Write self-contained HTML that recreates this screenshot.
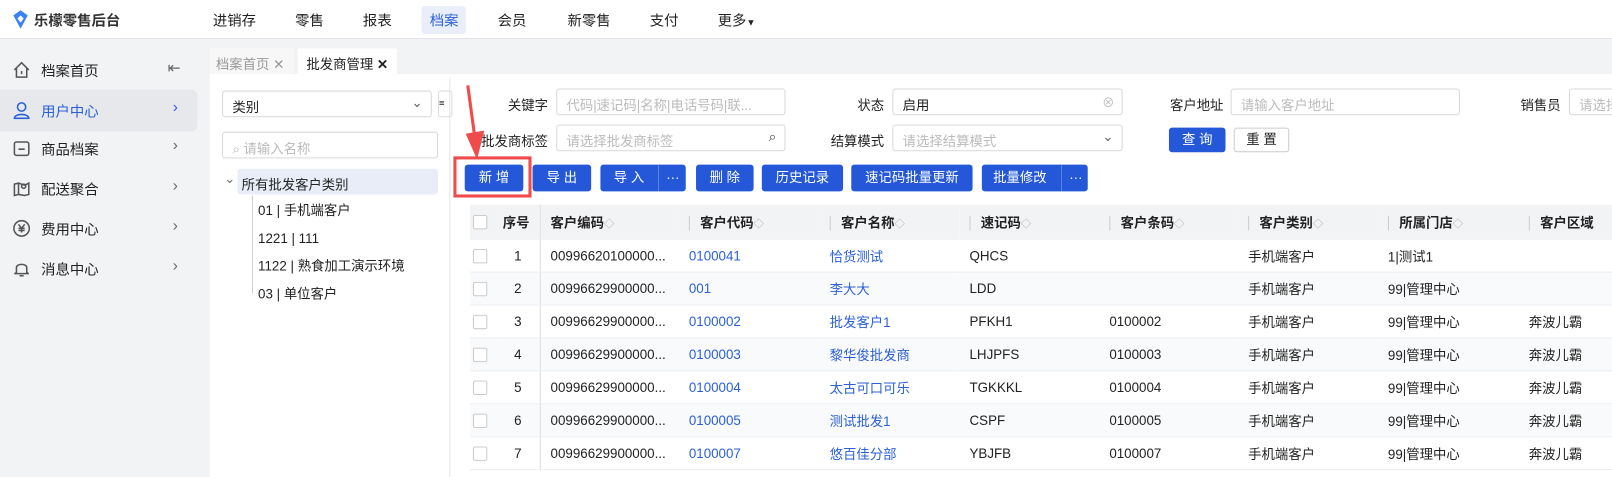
<!DOCTYPE html><html><head><meta charset="utf-8"><style>
*{box-sizing:border-box;margin:0;padding:0}
body{width:1612px;height:464px;overflow:hidden;background:#f2f3f5;font-family:"Liberation Sans","Noto Sans CJK SC",sans-serif;font-size:13px;color:#222;position:relative}
#w{position:absolute;left:0;top:0;width:1568px;height:451px;transform:scale(1.0281,1.0288);transform-origin:0 0}
.a{position:absolute}
.top{left:0;top:0;width:1612px;height:38px;background:#fff;border-bottom:1px solid #e2e3e6}
.nav{top:10px;font-size:14px;color:#222}
.side .it{position:absolute;left:0;width:192px;height:38px;font-size:14px}
.it span{position:absolute;left:40px;top:10px}
.it .ch{left:168px;top:8px;color:#666;font-size:15px}
.ic{position:absolute;left:12px;top:10px}
.inp{position:absolute;height:26px;border:1px solid #d9d9d9;border-radius:3px;background:#fff;color:#bbb;padding:5px 9px;font-size:13px;white-space:nowrap;overflow:hidden}
.lbl{position:absolute;font-size:13px;color:#222;text-align:right}
.btn{position:absolute;top:160px;height:26px;background:#2458d9;color:#fff;border-radius:3px;font-size:13px;text-align:center;line-height:26px}
table{position:absolute;left:457px;top:199px;border-collapse:collapse;table-layout:fixed;width:1160px}
td,th{height:32px;font-size:13px;padding:0 10px;white-space:nowrap;overflow:hidden;text-align:left;border-bottom:1px solid #ebeef3}
th{background:#f2f3f5;font-weight:bold;color:#222;height:33px}
tr:nth-child(odd) td{background:#f9fafb}
td.b{color:#2a5fd8}
.cb{display:inline-block;width:14px;height:14px;border:1px solid #ccc;border-radius:2px;background:#fff;vertical-align:middle}
.s{color:#aaa;font-weight:normal;font-size:10px}
th .sep{display:inline-block;width:1px;height:14px;background:#ccc;margin-right:10px;vertical-align:middle}
.tr{position:absolute;left:251px;height:18px;line-height:18px;overflow:hidden}
</style></head><body><div id="w">
<div class="a top"></div>
<svg class="a" style="left:12px;top:10px" width="16" height="18" viewBox="0 0 16 18"><path d="M8 0 L15 5 L8 18 L1 5Z" fill="#3b82f6"/><path d="M8 5 L11 8 L8 12 L5 8Z" fill="#fff"/></svg>
<div class="a" style="left:33px;top:10px;font-size:14px;font-weight:bold;color:#333">乐檬零售后台</div>
<div class="a" style="left:410px;top:6px;width:43px;height:27px;background:#e9eefa;border-radius:3px"></div>
<div class="a nav" style="left:207px">进销存</div>
<div class="a nav" style="left:287px">零售</div>
<div class="a nav" style="left:353px">报表</div>
<div class="a nav" style="left:418px;color:#2a5fd8">档案</div>
<div class="a nav" style="left:484px">会员</div>
<div class="a nav" style="left:552px">新零售</div>
<div class="a nav" style="left:632px">支付</div>
<div class="a nav" style="left:698px">更多<span style="font-size:9px">▼</span></div>

<div class="side">
<div class="it" style="top:49px"><svg class="ic" width="18" height="18" viewBox="0 0 18 18" fill="none" stroke="#555" stroke-width="1.5"><path d="M2 9 L9 2 L16 9 M4 7 V16 H14 V7 M9 10 V13"/></svg><span>档案首页</span><span class="ch" style="left:163px">⇤</span></div>
<div class="it" style="top:87px;background:#e6e8ec;border-radius:0 6px 6px 0;height:41px"><svg class="ic" style="top:11px" width="18" height="18" viewBox="0 0 18 18" fill="none" stroke="#2a5fd8" stroke-width="1.5"><circle cx="9" cy="6" r="4"/><path d="M2 17 C2 12 16 12 16 17Z"/></svg><span style="color:#2a5fd8;top:11px">用户中心</span><span class="ch" style="color:#2a5fd8;top:9px">›</span></div>
<div class="it" style="top:125px"><svg class="ic" width="18" height="18" viewBox="0 0 18 18" fill="none" stroke="#555" stroke-width="1.5"><rect x="2" y="3" width="14" height="13" rx="2"/><path d="M6 10 H12"/></svg><span>商品档案</span><span class="ch">›</span></div>
<div class="it" style="top:164px"><svg class="ic" width="18" height="18" viewBox="0 0 18 18" fill="none" stroke="#555" stroke-width="1.5"><path d="M2 5 L6 4 V15 L2 16Z M6 4 L12 6 L16 4 V15 L12 16 L6 15"/><circle cx="11" cy="7" r="2"/></svg><span>配送聚合</span><span class="ch">›</span></div>
<div class="it" style="top:203px"><svg class="ic" width="18" height="18" viewBox="0 0 18 18" fill="none" stroke="#555" stroke-width="1.5"><circle cx="9" cy="9" r="7.5"/><path d="M6 5 L9 9 L12 5 M9 9 V13 M6 9 H12 M6 11 H12"/></svg><span>费用中心</span><span class="ch">›</span></div>
<div class="it" style="top:242px"><svg class="ic" width="18" height="18" viewBox="0 0 18 18" fill="none" stroke="#555" stroke-width="1.5"><path d="M4 13 V8 C4 4 14 4 14 8 V13 L16 14 H2Z M7 16 H11"/></svg><span>消息中心</span><span class="ch">›</span></div>
</div>

<div class="a" style="left:204px;top:47px;width:82px;height:25px;background:#f7f7f8;color:#999;padding:5px 6px;font-size:13px">档案首页 ✕</div>
<div class="a" style="left:290px;top:47px;width:96px;height:25px;background:#fff;color:#222;padding:5px 8px;font-size:13px">批发商管理 <b>✕</b></div>
<div class="a" style="left:204px;top:72px;width:1408px;height:392px;background:#fff"></div>
<div class="a" style="left:437px;top:76px;width:1px;height:388px;background:#e5e6ea"></div>
<div class="a" style="left:426px;top:88px;width:14px;height:26px;border:1px solid #ddd;border-radius:3px;font-size:9px;padding-top:6px">≡</div>

<div class="inp" style="left:216px;top:88px;width:204px;color:#222">类别<span style="position:absolute;right:8px;top:3px;color:#666">⌄</span></div>
<div class="inp" style="left:216px;top:128px;width:210px">⌕ 请输入名称</div>
<div class="a" style="left:231px;top:164px;width:195px;height:25px;background:#e8edf8;border-radius:3px"></div>
<div class="a" style="left:218px;top:166px;color:#777">⌄</div>
<div class="a" style="left:235px;top:169px">所有批发客户类别</div>
<div class="a" style="left:245px;top:190px;width:1px;height:95px;background:#ccc"></div>
<div class="tr" style="top:196px">01 | 手机端客户</div>
<div class="tr" style="top:223px">1221 | 111</div>
<div class="tr" style="top:250px">1122 | 熟食加工演示环境</div>
<div class="tr" style="top:277px">03 | 单位客户</div>

<div class="lbl" style="left:480px;top:92px;width:53px">关键字</div>
<div class="inp" style="left:541px;top:86px;width:223px">代码|速记码|名称|电话号码|联...</div>
<div class="lbl" style="left:800px;top:92px;width:60px">状态</div>
<div class="inp" style="left:868px;top:86px;width:224px;color:#222">启用<span style="position:absolute;right:7px;top:4px;color:#bbb;font-size:12px">⊗</span></div>
<div class="lbl" style="left:1130px;top:92px;width:60px">客户地址</div>
<div class="inp" style="left:1197px;top:86px;width:223px">请输入客户地址</div>
<div class="lbl" style="left:1460px;top:92px;width:58px">销售员</div>
<div class="inp" style="left:1526px;top:86px;width:100px">请选择</div>
<div class="lbl" style="left:460px;top:127px;width:73px">批发商标签</div>
<div class="inp" style="left:541px;top:121px;width:223px">请选择批发商标签<span style="position:absolute;right:8px;top:3px;color:#444">⌕</span></div>
<div class="lbl" style="left:790px;top:127px;width:70px">结算模式</div>
<div class="inp" style="left:868px;top:121px;width:224px">请选择结算模式<span style="position:absolute;right:8px;top:3px;color:#666">⌄</span></div>
<div class="btn" style="left:1137px;top:124px;width:55px;height:24px;line-height:24px">查 询</div>
<div class="btn" style="left:1200px;top:124px;width:54px;height:24px;line-height:22px;background:#fff;color:#222;border:1px solid #ccc">重 置</div>

<div class="btn" style="left:452px;width:57px">新 增</div>
<div class="a" style="left:441px;top:152px;width:76px;height:40px;border:3px solid #ef4b4b"></div>
<div class="btn" style="left:518px;width:57px">导 出</div>
<div class="btn" style="left:584px;width:83px;text-align:left;padding-left:13px">导 入<span style="position:absolute;left:56px;top:0;height:26px;border-left:1px solid #5a80e0;padding-left:7px">···</span></div>
<div class="btn" style="left:677px;width:56px">删 除</div>
<div class="btn" style="left:741px;width:79px">历史记录</div>
<div class="btn" style="left:828px;width:118px">速记码批量更新</div>
<div class="btn" style="left:955px;width:103px;text-align:left;padding-left:11px">批量修改<span style="position:absolute;left:77px;top:0;height:26px;border-left:1px solid #5a80e0;padding-left:7px">···</span></div>
<svg class="a" style="left:440px;top:80px" width="40" height="80"><path d="M15 3 L22 55" stroke="#ef4b4b" stroke-width="3"/><path d="M13 50 L31 47 L24 75Z" fill="#ef4b4b"/></svg>

<table>
<colgroup><col style="width:26px"><col style="width:42px"><col style="width:135px"><col style="width:137px"><col style="width:136px"><col style="width:136px"><col style="width:135px"><col style="width:136px"><col style="width:137px"><col style="width:140px"></colgroup>
<tr><th style="padding:0 0 0 3px"><span class="cb"></span></th><th style="padding:0 0 0 6px;border-right:1px solid #ddd">序号</th><th>客户编码<span class="s">◇</span></th><th><span class="sep"></span>客户代码<span class="s">◇</span></th><th><span class="sep"></span>客户名称<span class="s">◇</span></th><th><span class="sep"></span>速记码<span class="s">◇</span></th><th><span class="sep"></span>客户条码<span class="s">◇</span></th><th><span class="sep"></span>客户类别<span class="s">◇</span></th><th><span class="sep"></span>所属门店<span class="s">◇</span></th><th><span class="sep"></span>客户区域</th></tr>
<tr><td style="padding:0 0 0 3px"><span class="cb"></span></td><td style="text-align:center;border-right:1px solid #ddd">1</td><td>00996620100000...</td><td class="b">0100041</td><td class="b">恰货测试</td><td>QHCS</td><td></td><td>手机端客户</td><td>1|测试1</td><td></td></tr>
<tr><td style="padding:0 0 0 3px"><span class="cb"></span></td><td style="text-align:center;border-right:1px solid #ddd">2</td><td>00996629900000...</td><td class="b">001</td><td class="b">李大大</td><td>LDD</td><td></td><td>手机端客户</td><td>99|管理中心</td><td></td></tr>
<tr><td style="padding:0 0 0 3px"><span class="cb"></span></td><td style="text-align:center;border-right:1px solid #ddd">3</td><td>00996629900000...</td><td class="b">0100002</td><td class="b">批发客户1</td><td>PFKH1</td><td>0100002</td><td>手机端客户</td><td>99|管理中心</td><td>奔波儿霸</td></tr>
<tr><td style="padding:0 0 0 3px"><span class="cb"></span></td><td style="text-align:center;border-right:1px solid #ddd">4</td><td>00996629900000...</td><td class="b">0100003</td><td class="b">黎华俊批发商</td><td>LHJPFS</td><td>0100003</td><td>手机端客户</td><td>99|管理中心</td><td>奔波儿霸</td></tr>
<tr><td style="padding:0 0 0 3px"><span class="cb"></span></td><td style="text-align:center;border-right:1px solid #ddd">5</td><td>00996629900000...</td><td class="b">0100004</td><td class="b">太古可口可乐</td><td>TGKKKL</td><td>0100004</td><td>手机端客户</td><td>99|管理中心</td><td>奔波儿霸</td></tr>
<tr><td style="padding:0 0 0 3px"><span class="cb"></span></td><td style="text-align:center;border-right:1px solid #ddd">6</td><td>00996629900000...</td><td class="b">0100005</td><td class="b">测试批发1</td><td>CSPF</td><td>0100005</td><td>手机端客户</td><td>99|管理中心</td><td>奔波儿霸</td></tr>
<tr><td style="padding:0 0 0 3px"><span class="cb"></span></td><td style="text-align:center;border-right:1px solid #ddd">7</td><td>00996629900000...</td><td class="b">0100007</td><td class="b">悠百佳分部</td><td>YBJFB</td><td>0100007</td><td>手机端客户</td><td>99|管理中心</td><td>奔波儿霸</td></tr>
</table>
</div></body></html>
